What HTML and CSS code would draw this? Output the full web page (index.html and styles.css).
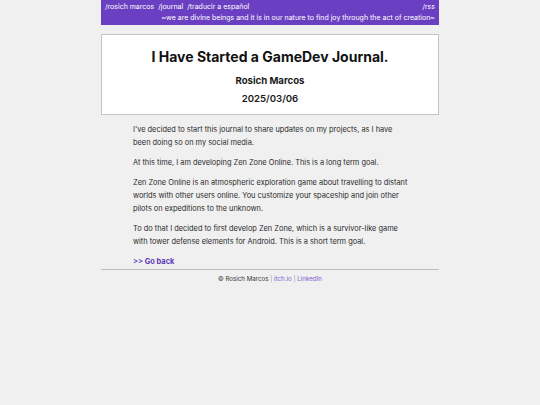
FILE: index.html
```html
<!DOCTYPE html>
<html>
<head>
<meta charset="utf-8">
<link rel="stylesheet" href="styles.css">
</head>
<body>
<div class="wrap">
  <header class="topbar">
    <div class="row">
      <nav class="links"><a href="#">/rosich marcos</a> <a href="#">/journal</a> <a href="#">/traducir a español</a></nav>
      <a href="#">/rss</a>
    </div>
    <div class="motto">~we are divine beings and it is in our nature to find joy through the act of creation~</div>
  </header>
  <section class="card">
    <h1>I Have Started a GameDev Journal.</h1>
    <div class="author">Rosich Marcos</div>
    <div class="date">2025/03/06</div>
  </section>
  <main class="content">
    <p>I've decided to start this journal to share updates on my projects, as I have been doing so on my social media.</p>
    <p>At this time, I am developing Zen Zone Online. This is a long term goal.</p>
    <p>Zen Zone Online is an atmospheric exploration game about travelling to distant worlds with other users online. You customize your spaceship and join other pilots on expeditions to the unknown.</p>
    <p>To do that I decided to first develop Zen Zone, which is a survivor-like game with tower defense elements for Android. This is a short term goal.</p>
    <a class="back" href="#">&gt;&gt; Go back</a>
  </main>
  <footer class="foot">
    © Rosich Marcos <span class="sep">|</span> <a href="#">itch.io</a> <span class="sep">|</span> <a href="#">LinkedIn</a>
  </footer>
</div>
</body>
</html>
```
FILE: styles.css
```css
html, body {
  margin: 0;
  padding: 0;
  background: #f0f0f0;
  font-family: Inter, "Liberation Sans", sans-serif;
  color: #1a1a1a;
}
a { text-decoration: none; color: inherit; }
.wrap {
  width: 338px;
  margin: 0 auto;
}
.topbar {
  background: #6a3fc2;
  color: #fff;
  font-size: 7px;
  line-height: 11px;
  padding: 1px 4px 2px;
}
.row {
  display: flex;
  justify-content: space-between;
}
.links a { margin-right: 2px; }
.motto { text-align: right; }
.card {
  margin-top: 9px;
  background: #fff;
  border: 1px solid #c4c4c4;
  padding: 12px 0 8px;
  text-align: center;
}
.card h1 {
  margin: 0;
  font-size: 14px;
  line-height: 20px;
  font-weight: 700;
  color: #111;
}
.author {
  margin-top: 7px;
  font-size: 9.6px;
  line-height: 14px;
  font-weight: 700;
}
.date {
  margin-top: 4px;
  font-size: 9.6px;
  line-height: 14px;
  font-weight: 600;
}
.content {
  padding: 8px 30px 1px 32px;
  font-size: 7.4px;
  line-height: 13px;
  color: #2a2a2a;
}
.content p {
  margin: 0 0 7px;
}
.back {
  display: block;
  color: #5b3bb8;
  font-weight: 700;
  line-height: 13px;
}
.foot {
  border-top: 1px solid #bdbdbd;
  text-align: center;
  font-size: 6.2px;
  line-height: 18px;
  color: #333;
}
.foot a { color: #7b5fd1; }
.foot .sep { color: #999; }
```
